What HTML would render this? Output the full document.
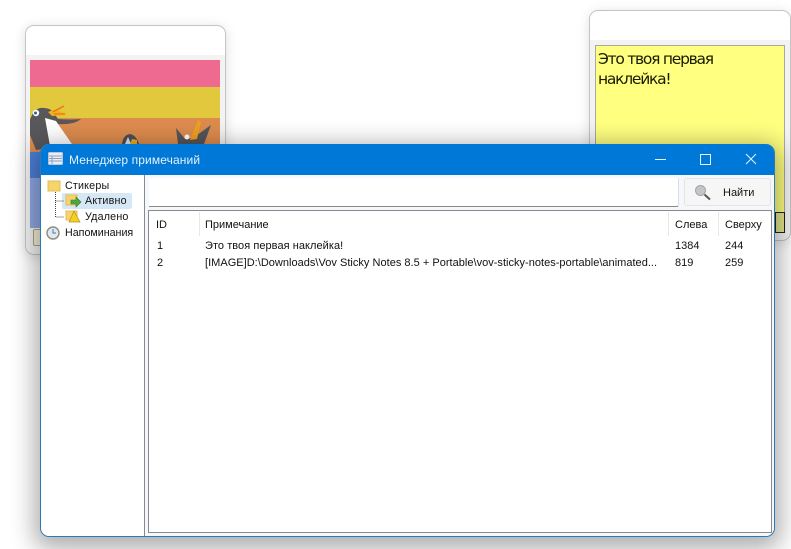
<!DOCTYPE html>
<html><head><meta charset="utf-8">
<style>
html,body{margin:0;padding:0;width:791px;height:549px;overflow:hidden;background:#fff}
body{position:relative;font-family:"Liberation Sans",sans-serif;font-size:11px;color:#111}
div,svg,span{position:absolute;box-sizing:border-box}
.t{white-space:nowrap;line-height:14px}
.s{font-size:10.7px}
</style></head><body>
<div style="left:0;top:0;width:791px;height:549px;background:#fff"></div>

<!-- left sticky -->
<div style="left:25px;top:25px;width:201px;height:230px;background:#f3f3f3;border:1px solid #c4c4c4;border-radius:9px;box-shadow:0 2px 12px rgba(0,0,0,.14);overflow:hidden">
  <div style="left:0;top:0;width:199px;height:29px;background:#fff"></div>
  <div style="left:4px;top:34px;width:190px;height:27px;background:#ee6a90"></div>
  <div style="left:4px;top:61px;width:190px;height:31px;background:#e1c83c"></div>
  <div style="left:4px;top:92px;width:190px;height:34px;background:#dd8c4e"></div>
  <div style="left:4px;top:126px;width:190px;height:26px;background:#4d7fd8"></div>
  <div style="left:4px;top:152px;width:190px;height:50px;background:#8fa9e4"></div>
  <div style="left:7px;top:203px;width:12px;height:17px;background:#f4efd8;border:1px solid #a8a78f;border-radius:2px"></div>
</div>
<!-- penguins -->
<svg style="left:0;top:0" width="791" height="549" viewBox="0 0 791 549">
  <path d="M30 120 Q33 110 40 108 Q50 107 54 113 L58 119 Q70 120 81 119 Q74 125 58 124 L72 144 L36 150 L30 135 Z" fill="#58585a"/>
  <path d="M45 118 L56 121 L72 144 L72 146 L50 146 Z" fill="#fff"/>
  <path d="M48 112 L66 105 L58 111 L65 113 L66 115 L52 116 Z" fill="#f2b01c"/>
  <path d="M53 112L64 106M54 114L65 114" stroke="#ea6a1c" fill="none"/>
  <circle cx="36" cy="113" r="3.2" fill="#fff"/><circle cx="35.5" cy="113" r="1.5" fill="#2a5fb0"/>
  <path d="M122 144 Q123 135 130 134 Q136 135 139 144 Z" fill="#4b5058"/>
  <path d="M125 144 L128 137 L131 144 Z" fill="#dfe3ea"/>
  <path d="M130 144 L132 139 L137 140 L137 144 Z" fill="#e8b01c"/>
  <path d="M178 144 L176 128 L185 139 L193 138 L211 125 L204 144 Z" fill="#55565a"/>
  <path d="M190 140 L198 120 L201 122 L197 139 Z" fill="#f0a01e"/>
  <circle cx="187" cy="137" r="2.5" fill="#fff"/>
</svg>

<!-- right sticky -->
<div style="left:589px;top:10px;width:202px;height:231px;background:#f3f3f3;border:1px solid #c4c4c4;border-radius:9px;box-shadow:0 2px 12px rgba(0,0,0,.12);overflow:hidden">
  <div style="left:0;top:0;width:200px;height:29px;background:#fff"></div>
  <div style="left:5px;top:34px;width:190px;height:175px;background:#ffff80;border:1px solid #a9a9a0"></div>
  <div style="left:185px;top:201px;width:10px;height:21px;background:#e6e68a;border:1px solid #222"></div>
</div>
<div class="t" style="left:598px;top:49px;font-size:15.5px;line-height:20px;color:#1a1a00;font-family:'DejaVu Sans',sans-serif;letter-spacing:-1.25px">Это твоя первая<br>наклейка!</div>

<!-- main window -->
<div style="left:40px;top:144px;width:735px;height:393px;background:#d8eaf8;border:1px solid #2b79b8;border-top:0;border-radius:9px;box-shadow:0 6px 24px 6px rgba(0,0,0,.32);overflow:hidden">
  <div style="left:-1px;top:0;width:735px;height:31px;background:#0078d7"></div>
  <div style="left:0;top:31px;width:104px;height:361px;background:#fff;border-right:1px solid #8a8a8a"></div>
  <div style="left:104px;top:31px;width:629px;height:361px;background:#f4f8fc"></div>
</div>
<!-- title -->
<svg style="left:48px;top:152px" width="15" height="13" viewBox="0 0 15 13">
  <rect x=".5" y=".5" width="14" height="12" rx="1" fill="#e8eef5" stroke="#b8c6d8"/>
  <path d="M1 4H14M1 6.5H14M1 9H14M4 4V12" stroke="#8aa0bd" fill="none"/>
</svg>
<div class="t" style="left:69px;top:153px;font-size:12px;color:#e4f1fb;letter-spacing:.12px">Менеджер примечаний</div>
<svg style="left:650px;top:150px" width="115" height="18" viewBox="0 0 115 18" fill="none" stroke="#eaf4fc" stroke-width="1">
  <path d="M5 9.5H16"/>
  <rect x="50.5" y="4.5" width="10" height="10"/>
  <path d="M96 4L106 14M106 4L96 14"/>
</svg>

<!-- sidebar tree -->
<div style="left:62px;top:193px;width:70px;height:16px;background:#d6e8f6;border-radius:2px"></div>
<svg style="left:42px;top:176px" width="60" height="68" viewBox="0 0 60 68">
  <path d="M13.5 16V41H22M13.5 25H22" stroke="#444" stroke-dasharray="1 1" fill="none"/>
  <rect x="6" y="5" width="12" height="10" fill="#f6d469" stroke="#e0bc5c"/>
  <rect x="24" y="19" width="11" height="10" fill="#f6d469" stroke="#e0bc5c"/>
  <path d="M29 24H34V21L39 26L34 31V28H29Z" fill="#4fa83c" stroke="#2e7a2a" stroke-width=".6"/>
  <rect x="24" y="35" width="11" height="9" fill="#f6d469" stroke="#e0bc5c"/>
  <path d="M32 35L38 46H27Z" fill="#f4d020" stroke="#b89020" stroke-width=".7"/>
  <circle cx="11" cy="57" r="6" fill="#dfe7ef" stroke="#8f8a78" stroke-width="1.4"/>
  <path d="M11 53V57H14" stroke="#4a78b0" fill="none"/>
</svg>
<div class="t s" style="left:65px;top:179px;letter-spacing:.2px">Стикеры</div>
<div class="t s" style="left:85px;top:194px;letter-spacing:.2px">Активно</div>
<div class="t s" style="left:85px;top:210px;letter-spacing:.2px">Удалено</div>
<div class="t s" style="left:65px;top:226px">Напоминания</div>

<!-- search -->
<div style="left:149px;top:178px;width:530px;height:29px;background:#fff;border-right:1px solid #ddd;border-bottom:1px solid #8a8a8a;border-radius:0 2px 2px 0"></div>
<div style="left:684px;top:178px;width:87px;height:28px;background:#f6f6f6;border:1px solid #e4e4e4;border-radius:3px"></div>
<svg style="left:694px;top:184px" width="18" height="18" viewBox="0 0 18 18">
  <circle cx="6.5" cy="6.5" r="5" fill="#c4c6c8" stroke="#a2a4a6"/>
  <path d="M10.5 10.5L16 15.5" stroke="#555" stroke-width="2"/>
</svg>
<div class="t" style="left:723px;top:186px">Найти</div>

<!-- list -->
<div style="left:148px;top:210px;width:624px;height:323px;background:#fff;border:1px solid #8a8a8a"></div>
<div style="left:199px;top:212px;width:1px;height:24px;background:#e8e8e8"></div>
<div style="left:668px;top:212px;width:1px;height:24px;background:#e8e8e8"></div>
<div style="left:718px;top:212px;width:1px;height:24px;background:#e8e8e8"></div>
<div class="t" style="left:156px;top:218px">ID</div>
<div class="t" style="left:205px;top:218px">Примечание</div>
<div class="t" style="left:675px;top:218px">Слева</div>
<div class="t" style="left:725px;top:218px">Сверху</div>

<div class="t" style="left:157px;top:239px">1</div>
<div class="t" style="left:205px;top:239px;letter-spacing:.05px">Это твоя первая наклейка!</div>
<div class="t" style="left:675px;top:239px">1384</div>
<div class="t" style="left:725px;top:239px">244</div>

<div class="t" style="left:157px;top:256px">2</div>
<div class="t" style="left:205px;top:256px;letter-spacing:.02px">[IMAGE]D:\Downloads\Vov Sticky Notes 8.5 + Portable\vov-sticky-notes-portable\animated...</div>
<div class="t" style="left:675px;top:256px">819</div>
<div class="t" style="left:725px;top:256px">259</div>
</body></html>
